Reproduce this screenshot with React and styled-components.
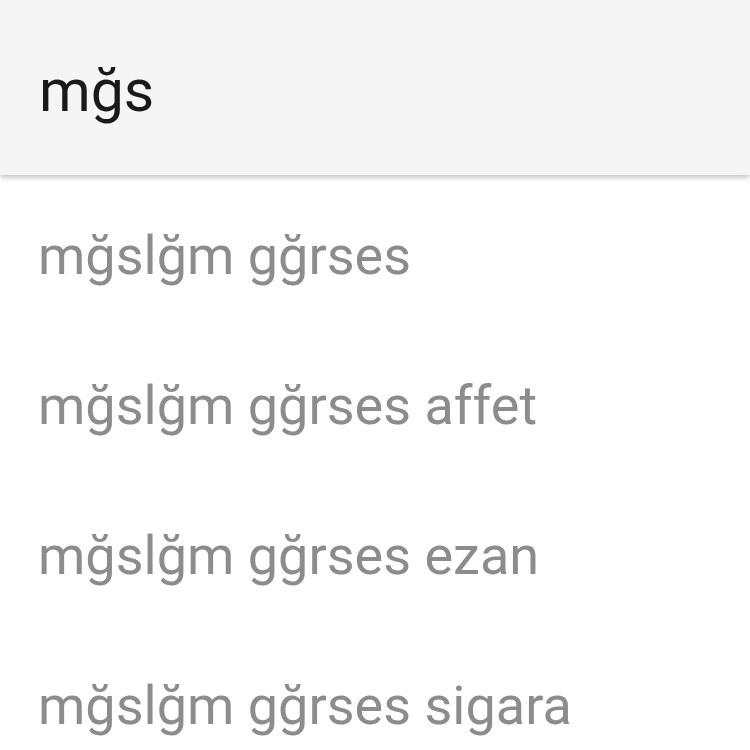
import React from 'react';
import styled, { createGlobalStyle } from 'styled-components';

const suggestions = [
  'mğslğm gğrses',
  'mğslğm gğrses affet',
  'mğslğm gğrses ezan',
  'mğslğm gğrses sigara',
];

const App = () => {
  return (
    <Page>
      <GlobalStyle />
      <SearchBar>
        <Query>mğs</Query>
      </SearchBar>
      <List>
        {suggestions.map((text, index) => (
          <Item key={index}>{text}</Item>
        ))}
      </List>
    </Page>
  );
};

export default App;

const GlobalStyle = createGlobalStyle`
  body { margin: 0; background: #fff; }
  * { box-sizing: border-box; }
`;

const Page = styled.div`
  width: 750px; height: 750px;
  overflow: hidden;
  font-family: Roboto, "Noto Sans", sans-serif;
  background: #fff;
`;

const SearchBar = styled.div`
  position: relative; z-index: 1;
  height: 175px;
  display: flex; align-items: center;
  padding: 6px 39px 0;
  background: #f5f5f5;
  box-shadow: 0 2px 6px rgba(0, 0, 0, 0.28);
`;

const Query = styled.div`
  font-size: 59px;
  color: #1a1a1a;
`;

const List = styled.ul`
  margin: 0; padding: 5px 0 0;
  list-style: none;
`;

const Item = styled.li`
  height: 150px;
  display: flex; align-items: center;
  padding: 0 38px;
  font-size: 54px;
  color: #8c8c8c;
`;
